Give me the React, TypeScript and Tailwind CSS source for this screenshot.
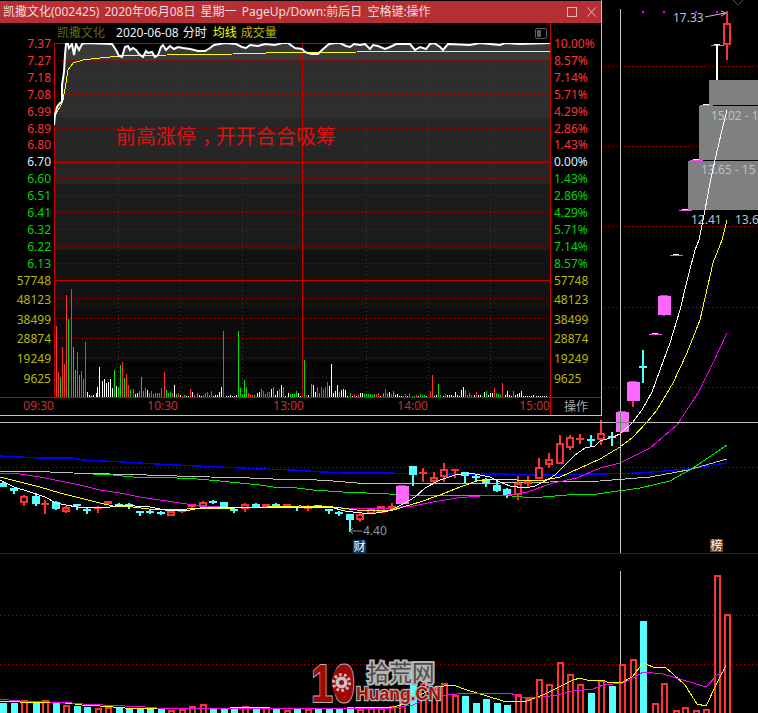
import React from "react";

const R = "#ff3232";
const G = "#00e000";
const W = "#ffffff";
const CY = "#55ffff";
const MG = "#ff66ff";
const GRID = "#c00000";

const toPts = (a: number[][]) => a.map((p) => p.join(",")).join(" ");

const price = [[54,125],[55,115],[57,107],[60,103],[62,102],[62,85],[64,72],[65,55],[66,44],[68,44],[69,48],[72,44],[74,55],[76,44],[79,50],[82,44],[85,43],[112,44],[116,50],[119,56],[122,57],[125,47],[128,46],[130,50],[133,48],[136,50],[139,54],[143,57],[146,51],[148,53],[152,52],[155,57],[158,55],[161,47],[163,45],[166,50],[170,46],[174,49],[178,47],[183,48],[190,49],[198,51],[205,51],[210,48],[214,45],[225,43],[236,44],[242,47],[246,48],[250,45],[258,46],[265,44],[275,45],[282,43],[288,43],[295,48],[302,49],[305,52],[308,53],[312,54],[318,54],[322,50],[329,44],[335,43],[340,43],[346,46],[350,47],[354,44],[360,45],[365,44],[370,49],[373,45],[378,46],[385,49],[390,47],[396,44],[410,44],[415,50],[420,47],[426,49],[430,44],[434,43],[440,47],[443,50],[448,44],[470,45],[480,43],[490,44],[500,45],[505,43],[520,44],[550,43]];
const avg = [[55,115],[60,107],[63,100],[66,83],[68,70],[73,63],[83,60],[100,58],[120,56],[167,55],[233,54],[283,52.5],[310,53],[357,52],[360,51.5],[550,51]];

const volA: [number, number, string][] = [[168,168,R],[174,306,R],[180,320,G],[187,232,R],[193,282,R],[199,75,R],[205,148,G],[213,57,R],[220,232,G],[226,300,G],[232,246,R],[238,315,G],[244,304,R],[250,327,G],[256,216,R],[262,366,W],[268,375,W],[274,378,W],[280,375,W],[287,369,W],[292,350,W],[298,291,W],[306,333,W],[312,327,W],[319,338,W],[325,336,W],[331,327,W],[337,354,W],[343,300,G],[349,348,W],[355,351,G],[361,285,G],[367,276,R],[373,323,G],[379,312,R],[385,345,R],[391,360,G],[400,357,R],[406,372,W],[412,369,W],[418,363,G],[424,321,G],[430,363,G],[436,354,R],[442,360,W],[448,369,G],[454,363,R],[460,372,R],[466,369,G],[472,369,G],[478,369,R],[484,354,R],[493,306,R],[499,360,G],[505,369,G],[511,366,G],[517,369,R],[523,345,W],[529,372,G],[535,369,R],[541,375,W],[547,378,R],[553,375,G],[559,378,W],[565,378,W],[571,357,R],[577,366,W],[583,375,R],[592,369,G],[598,375,W],[604,378,W],[610,375,R],[616,369,R],[622,366,R],[628,375,G],[634,363,R],[640,378,W],[646,375,W],[652,375,W],[658,366,W],[664,351,W],[670,183,R],[678,378,W],[684,378,W],[690,375,W],[696,378,W],[702,378,W],[708,375,W],[715,183,G],[721,354,G],[727,372,G],[733,330,G],[739,351,G],[745,369,R],[751,372,R],[757,375,R],[763,375,G],[771,369,W],[777,366,W],[784,357,G],[790,363,R],[796,372,G],[802,366,R],[808,366,R],[814,357,W],[820,351,G],[826,375,W],[832,363,W],[838,357,R],[844,345,W],[850,351,R],[856,378,W],[864,369,W],[871,372,G],[877,372,G],[883,372,G],[889,363,G],[895,369,W],[901,378,W],[913,270,G],[919,375,R],[925,375,W]];
const volB: [number, number, string][] = [[32,342,G],[38,345,W],[44,366,W],[50,351,R],[58,369,G],[64,351,R],[70,357,R],[76,351,R],[82,336,R],[88,348,W],[94,282,W],[100,369,W],[106,363,W],[112,345,W],[118,366,G],[124,360,W],[130,357,W],[136,360,W],[142,378,W],[150,369,G],[156,378,W],[163,372,R],[169,378,W],[175,375,R],[181,369,W],[187,369,W],[193,372,G],[199,372,G],[205,372,G],[211,372,G],[217,375,G],[223,372,G],[229,372,R],[235,369,R],[241,378,W],[249,369,G],[255,357,R],[261,369,G],[267,366,W],[273,372,R],[279,363,G],[285,375,W],[291,372,W],[297,378,W],[303,378,W],[309,378,R],[316,372,R],[322,378,W],[328,369,R],[336,378,G],[342,378,G],[348,375,R],[354,378,W],[360,372,G],[366,375,G],[372,375,G],[378,378,W],[391,363,R],[397,315,R],[403,378,W],[409,375,W],[415,342,G],[421,375,G],[429,378,W],[435,372,R],[441,375,W],[447,375,W],[453,375,W],[459,378,W],[466,366,W],[472,375,W],[478,378,W],[484,360,W],[490,351,W],[496,360,G],[502,375,R],[508,369,G],[514,375,R],[522,375,W],[529,366,R],[535,375,W],[541,375,W],[547,378,G],[553,366,W],[559,363,G],[565,375,W],[571,369,W],[577,369,W],[583,354,R],[589,369,G],[595,372,G],[601,375,G],[607,339,R],[616,375,W],[622,363,W],[628,375,W],[634,378,W],[640,363,G],[646,375,W],[652,372,W],[658,369,W],[664,363,W],[670,378,W],[676,378,W],[682,378,W],[688,378,W],[694,378,W],[700,375,W],[708,378,W],[714,378,W],[720,378,W],[726,378,W],[732,378,W],[738,378,W]];
const vols = [
  ...volA.map(([z, t, c]) => ({ x: Math.round(z / 3), y: Math.round(270 + t / 3), c })),
  ...volB.map(([z, t, c]) => ({ x: Math.round(300 + z / 3), y: Math.round(270 + t / 3), c })),
];

type C = [number, number, number, number, number, string];
const candles: C[] = [
  [3,481,487,483,487,"c"],[14,488,494,488,491,"c"],[24,495,506,496,503,"r"],[36,493,506,496,504,"c"],[45,500,514,503,505,"f"],[56,501,510,502,509,"c"],[66,506,513,507,512,"r"],[77,504,510,504,505,"c"],[87,507,514,509,510,"c"],[98,506,513,507,509,"f"],[108,501,504,501,504,"f"],[119,503,507,504,506,"c"],[129,503,509,504,507,"c"],[140,511,516,511,512,"c"],[150,509,514,511,512,"c"],[161,511,515,512,513,"c"],[171,511,516,511,516,"r"],[182,509,513,509,512,"f"],[192,504,509,504,507,"f"],[203,501,509,502,507,"r"],[213,500,504,501,503,"c"],[224,502,509,502,507,"c"],[234,508,513,509,511,"c"],[245,503,512,504,509,"r"],[256,503,507,504,507,"c"],[266,504,507,504,507,"f"],[276,503,506,504,505,"c"],[287,504,507,504,507,"f"],[297,506,511,506,507,"c"],
  [308,505,511,506,509,"f"],[318,505,507,505,507,"c"],[329,509,514,509,511,"c"],[339,511,516,512,513,"c"],[350,514,532,514,520,"c"],[360,513,522,514,520,"r"],[371,509,514,509,514,"r"],[381,506,513,506,513,"r"],[392,503,509,506,509,"f"],[413,466,486,466,475,"c"],[423,468,482,472,474,"f"],[434,472,483,477,482,"r"],[444,463,482,469,477,"r"],[455,469,478,469,471,"f"],[465,472,483,472,476,"c"],[476,475,482,476,477,"c"],[486,478,487,479,484,"c"],[497,481,492,485,491,"c"],[507,488,498,489,495,"c"],[518,476,500,483,495,"r"],[528,476,487,481,484,"r"],[539,458,479,467,479,"r"],[549,453,468,459,465,"r"],[560,435,464,443,464,"r"],[570,435,450,437,448,"r"],[580,434,444,438,440,"f"],[591,435,446,439,441,"c"],[601,420,445,433,440,"r"],[612,432,446,436,438,"c"],[643,350,383,366,368,"c"],[727,12,60,23,45,"r"],
];
const mags: [number, number, number, number][] = [[402,486,504,504],[622,412,432,433],[633,382,401,407],[664,296,315,316]];
const dojis: [number, number][] = [[655,334],[676,255],[685,210],[696,160],[706,105],[717,45]];

const MA5 = [[0,480],[14,487],[30,492],[45,497],[56,503],[66,505],[77,507],[90,507.5],[105,508],[115,506],[125,505.5],[135,506],[150,507],[165,510],[180,511],[190,510],[200,508],[210,507],[240,507],[300,507],[330,507],[345,511],[370,514],[388,511],[395,508],[405,503],[415,497],[425,488],[440,480],[455,475],[470,473],[480,475],[490,477],[500,482],[510,486],[525,488],[535,486],[545,481],[555,475],[565,465],[575,455],[585,448],[595,446],[600,441],[610,438],[620,434],[632,423],[642,410],[652,392],[660,370],[670,343],[680,310],[688,277],[695,250],[699,240],[705,210],[710,183],[715,160],[722,130],[727,110]];
const MA10 = [[0,477],[20,482],[40,487],[60,493],[80,498],[100,503],[113,506],[133,507],[157,510],[187,509],[207,508],[233,508],[267,507],[300,506],[333,507],[357,510],[390,511],[403,507],[420,502],[440,495],[460,487],[477,481],[497,479],[517,480],[540,481],[560,477],[580,468],[600,459],[620,447],[633,437],[647,422],[657,410],[673,383],[687,353],[700,320],[713,263],[722,240],[727,220]];
const MA20 = [[0,473],[20,474],[40,477],[60,481],[80,485],[100,490],[120,493],[140,497],[160,500],[180,503],[200,506],[220,507],[260,508],[300,507],[343,508],[390,508],[413,506],[433,502],[457,498],[480,496],[507,495],[527,492],[553,483],[577,478],[600,468],[620,463],[650,448],[677,425],[698,393],[713,363],[727,333]];
const GREEN = [[93,474],[113,475],[133,477],[157,477],[177,478],[197,479],[220,481],[240,483],[260,485],[273,487],[297,488],[313,490],[343,492],[367,493],[410,495],[457,495],[500,495],[523,497],[543,497],[567,495],[597,494],[640,488],[670,481],[693,468],[727,445]];
const GREY = [[0,471],[20,471],[50,472],[73,473],[110,474],[147,475],[177,476],[210,477],[250,478],[273,479],[300,479],[333,481],[357,483],[400,483],[500,483],[600,481],[650,477],[688,470],[727,459]];
const BLUE = [[0,456],[20,457],[40,458],[72,458],[83,460],[103,461],[123,462],[157,464],[177,465],[197,466],[220,467],[240,468],[260,469],[293,470],[323,472],[347,473],[377,473],[460,474],[500,474],[540,475],[600,474],[640,473],[688,469],[727,463]];

const vBars: [number, number, string][] = [[3,703,"c"],[14,703,"c"],[24,700,"r"],[36,703,"c"],[45,700,"r"],[56,703,"c"],[66,705,"r"],[77,706,"c"],[87,707,"c"],[98,708,"r"],[108,707,"r"],[119,707,"c"],[129,709,"c"],[140,708,"c"],[150,708,"c"],[161,709,"c"],[171,710,"r"],[182,709,"r"],[192,706,"r"],[203,704,"r"],[213,709,"c"],[224,709,"c"],[234,709,"c"],[245,706,"r"],[256,709,"c"],[266,707,"r"],[276,709,"c"],[287,710,"r"],[297,709,"c"],[308,709,"r"],[318,709,"c"],[329,709,"c"],[339,709,"c"],[350,707,"c"],[360,709,"r"],[371,708,"r"],[381,708,"r"],[392,706,"r"],[402,695,"r"],[413,668,"c"],[423,683,"r"],[434,687,"r"],[444,683,"r"],[455,695,"r"],[465,696,"c"],[476,703,"c"],[486,699,"c"],[497,703,"c"],[507,705,"c"],[518,694,"r"],[528,698,"r"],[539,679,"r"],[549,684,"r"],[560,662,"r"],[570,674,"r"],[580,684,"r"],[591,693,"c"],[601,680,"r"],[612,686,"c"],[622,664,"r"],[633,659,"r"],[643,621,"c"],[655,703,"r"],[664,683,"r"],[676,710,"r"],[685,707,"r"],[696,710,"r"],[706,709,"r"],[717,575,"r"],[727,614,"r"]];
const subY = [[0,701],[10,701],[20,702],[50,702],[65,703],[75,704],[85,705.5],[100,706],[125,708],[155,708],[210,709],[250,707],[290,709],[355,708],[393,707],[408,703],[420,695],[435,687],[453,685],[467,690],[487,696],[503,701],[527,701],[543,695],[557,688],[573,680],[580,678],[590,681],[602,680],[610,683],[623,682],[632,677],[643,663],[653,667],[665,667],[673,674],[685,685],[697,704],[706,706],[717,683],[726,665]];
const subM = [[0,699],[9,700],[20,701],[50,702],[72,703],[83,704],[103,705],[125,706],[145,707],[157,708],[393,708],[413,705],[427,698],[447,695],[467,693],[510,693],[520,697],[543,697],[557,695],[573,691],[593,689],[603,685],[623,683],[635,677],[643,672],[663,674],[683,680],[706,687],[717,675],[726,670]];

const priceLabels: [string, string][] = [["7.37","#ff3232"],["7.27","#ff3232"],["7.18","#ff3232"],["7.08","#ff3232"],["6.99","#ff3232"],["6.89","#ff3232"],["6.80","#ff3232"],["6.70","#dfeeff"],["6.60","#00d800"],["6.51","#00d800"],["6.41","#00d800"],["6.32","#00d800"],["6.22","#00d800"],["6.13","#00d800"]];
const pctLabels: [string, string][] = [["10.00%","#ff3232"],["8.57%","#ff3232"],["7.14%","#ff3232"],["5.71%","#ff3232"],["4.29%","#ff3232"],["2.86%","#ff3232"],["1.43%","#ff3232"],["0.00%","#dfeeff"],["1.43%","#00d800"],["2.86%","#00d800"],["4.29%","#00d800"],["5.71%","#00d800"],["7.14%","#00d800"],["8.57%","#00d800"]];
const volLabels = ["57748", "48123", "38499", "28874", "19249", "9625"];
const FONT = "font-['Noto_Sans','Noto_Sans_CJK_SC',sans-serif]";

function Line({ p, c, w = 1 }: { p: number[][]; c: string; w?: number }) {
  return <polyline points={toPts(p)} fill="none" stroke={c} strokeWidth={w} shapeRendering="crispEdges" />;
}

function DotLine({ x1, x2, y1, y2 }: { x1: number; x2: number; y1: number; y2: number }) {
  return <line x1={x1} x2={x2} y1={y1} y2={y2} stroke={GRID} strokeDasharray="1 3" shapeRendering="crispEdges" />;
}

function KLinePane() {
  return (
    <svg width="758" height="553" viewBox="0 0 758 553" className={`block ${FONT}`}>
      {[66, 146, 226, 307, 387, 467].map((y) => (
        <DotLine key={y} x1={0} x2={758} y1={y + 0.5} y2={y + 0.5} />
      ))}
      <rect x="709" y="80" width="49" height="25" fill="#808080" />
      <rect x="699" y="106" width="59" height="54" fill="#808080" />
      <rect x="688" y="161" width="70" height="49" fill="#808080" />
      <text x="711" y="120" fontSize="12" fill="#b4c4c8">15.02 - 1</text>
      <text x="701" y="174" fontSize="12" fill="#b4c4c8">13.65 - 15</text>
      <text x="691" y="224" fontSize="12" fill="#b4c4c8">12.41</text>
      <text x="735" y="224" fontSize="12" fill="#b4c4c8">13.6</text>

      <Line p={BLUE} c="#0000ff" w={1.4} />
      <Line p={GREY} c="#c0c0c0" />
      <Line p={GREEN} c="#00f000" />

      {candles.map(([x, hi, lo, t, b, k], i) => {
        const col = k === "c" ? CY : R;
        return (
          <g key={i} shapeRendering="crispEdges">
            <rect x={x - 1} y={hi} width="2" height={lo - hi} fill={col} />
            {k === "r" ? (
              <rect x={x - 3} y={t + 1} width="6" height={Math.max(b - t - 2, 1)} fill="#000" stroke={R} strokeWidth="2" />
            ) : (
              <rect x={x - 4} y={t} width="8" height={Math.max(b - t, 2)} fill={col} />
            )}
          </g>
        );
      })}
      {mags.map(([x, t, b, lo]) => (
        <g key={x} shapeRendering="crispEdges">
          <rect x={x - 1} y={t} width="2" height={lo - t} fill={R} />
          <rect x={x - 4} y={t - 1} width="8" height="1" fill={R} />
          <rect x={x - 6.5} y={t} width="13" height={b - t} fill={MG} />
        </g>
      ))}
      {dojis.map(([x, y]) => (
        <g key={x} shapeRendering="crispEdges">
          <rect x={x - 6.5} y={y} width="13" height="1" fill="#ff44ff" />
          <rect x={x - 3} y={y - 1} width="6" height="1" fill="#fff" />
        </g>
      ))}
      <rect x="716" y="45" width="2" height="35" fill="#fff" shapeRendering="crispEdges" />

      <Line p={MA20} c="#ff00ff" />
      <Line p={MA10} c="#ffff00" />
      <Line p={MA5} c="#ffffff" />

      {[643, 664, 696, 717, 727].map((x) => (
        <rect key={x} x={x - 1} y="11" width="2" height="2" fill="#ff00ff" />
      ))}
      <text x="673" y="22" fontSize="12" fill="#a8c4dc">17.33</text>
      <polyline points="705,17 725,13" fill="none" stroke="#c0c0c0" />
      <polyline points="721,11 726,13 721,16" fill="none" stroke="#c0c0c0" />
      <polyline points="733,0 738,5 743,0" fill="none" stroke="#555555" />

      <text x="363" y="535" fontSize="12" fill="#8a9aa8">4.40</text>
      <polyline points="350,531 362,531" fill="none" stroke="#909090" />
      <polyline points="353,528 350,531 353,534" fill="none" stroke="#909090" />

      <rect x="0" y="422" width="758" height="1" fill="#c0c0c0" />
      <rect x="620" y="9" width="1" height="544" fill="#c0c0c0" />
      <rect x="620" y="412" width="1" height="20" fill="#5a9a5a" />
      <rect x="616" y="422" width="13" height="1" fill="#5a9a5a" />
    </svg>
  );
}

function VolumePane() {
  return (
    <svg width="758" height="160" viewBox="0 553 758 160" className={`block ${FONT}`}>
      <rect x="0" y="553" width="758" height="1" fill="#8a0000" />
      {[615, 664].map((y) => (
        <DotLine key={y} x1={0} x2={758} y1={y + 0.5} y2={y + 0.5} />
      ))}
      <rect x="620" y="571" width="1" height="142" fill="#c0c0c0" />
      {vBars.map(([x, t, k]) =>
        k === "c" ? (
          <rect key={x} x={x - 3.5} y={t} width="7" height={713 - t} fill={CY} shapeRendering="crispEdges" />
        ) : (
          <rect key={x} x={x - 2.5} y={t + 1} width="5" height={715 - t} fill="#000" stroke={R} strokeWidth="2" shapeRendering="crispEdges" />
        )
      )}
      <Line p={subY} c="#ffff00" />
      <Line p={subM} c="#ff00ff" />

      <g>
        <text x="367" y="681" fontSize="22.5" fill="#4a4a4a" stroke="#b4b4b4" strokeWidth="4" paintOrder="stroke">拾荒网</text>
        <text x="311" y="702" fontSize="54" fontWeight="700" fill="#a00808" stroke="#b4b4b4" strokeWidth="2" paintOrder="stroke" textLength="44" lengthAdjust="spacingAndGlyphs" className="font-['Liberation_Sans',sans-serif]">10</text>
        <ellipse cx="341.5" cy="682.5" rx="10" ry="15" fill="#a00808" />
        <circle cx="341.5" cy="682.5" r="8" fill="none" stroke="#c4c4c4" strokeWidth="3" strokeDasharray="2.6 2.4" />
        <circle cx="341.5" cy="682.5" r="6" fill="#c4c4c4" />
        <circle cx="341.5" cy="682.5" r="2.5" fill="#a00808" />
        <text x="356" y="700" fontSize="19" fontWeight="700" fill="#a81010" stroke="#b4b4b4" strokeWidth="2.5" paintOrder="stroke" textLength="85" lengthAdjust="spacingAndGlyphs" className="font-['Liberation_Sans',sans-serif]">Huang.CN</text>
      </g>
    </svg>
  );
}

function Plot() {
  const hLines = Array.from({ length: 14 }, (_, i) => Math.round(43 + i * 16.92) + 0.5);
  const vDots = [118, 180, 242, 366, 428, 490];
  const volLines = [298.5, 318.5, 338.5, 357.5, 377.5];
  return (
    <div className="relative w-[496px] h-[354px]">
      <svg width="496" height="354" viewBox="54 43 496 354" className="block">
        <rect x="54" y="43" width="496" height="17" fill="#3a3a3a" />
        <rect x="54" y="60" width="496" height="58" fill="#2e2e2e" />
        <rect x="54" y="118" width="496" height="66" fill="#262626" />
        <rect x="54" y="184" width="496" height="66" fill="#1c1c1c" />
        <rect x="54" y="250" width="496" height="59" fill="#121212" />
        <rect x="54" y="309" width="496" height="52" fill="#0c0c0c" />
        <rect x="54" y="361" width="496" height="36" fill="#050505" />
        <polygon points={`54,43 ${toPts(price)} 550,43`} fill="#000" />
        {hLines.map((y) => (
          <DotLine key={y} x1={54} x2={550} y1={y} y2={y} />
        ))}
        {volLines.map((y) => (
          <DotLine key={y} x1={54} x2={550} y1={y} y2={y} />
        ))}
        {vDots.map((x) => (
          <DotLine key={x} x1={x + 0.5} x2={x + 0.5} y1={43} y2={397} />
        ))}
        <g stroke="#c80000" shapeRendering="crispEdges">
          <line x1="54" x2="550" y1="43.5" y2="43.5" />
          <line x1="54" x2="550" y1="162.5" y2="162.5" />
          <line x1="54" x2="550" y1="280.5" y2="280.5" />
          <line x1="54.5" x2="54.5" y1="43" y2="397" />
          <line x1="302.5" x2="302.5" y1="43" y2="397" />
        </g>
        {vols.map((v, i) => (
          <rect key={i} x={v.x} y={v.y} width="1" height={397 - v.y} fill={v.c} shapeRendering="crispEdges" />
        ))}
        <Line p={avg} c="#ffff00" />
        <polyline points={toPts(price)} fill="none" stroke="#ffffff" strokeWidth="2" />
      </svg>
      <div className={`absolute left-[62px] top-[81px] text-[20px] leading-[26px] text-[#e01010] whitespace-nowrap ${FONT}`}>
        前高涨停<span className="pl-[6px] tracking-[-6px]">，</span>开开合合吸筹
      </div>
    </div>
  );
}

function QuoteWindow() {
  return (
    <div className={`absolute left-0 top-0 w-[602px] h-[416px] bg-black border-r border-b border-[#c4c4c4] pt-px text-[12px] ${FONT}`}>
      <div className="h-[22px] bg-[#b52f35] flex items-center justify-between pl-[3px] pr-[5px] text-[#f4dcdc] whitespace-nowrap [word-spacing:2px]">
        <span>凯撒文化(002425) 2020年06月08日 星期一 PageUp/Down:前后日 空格键:操作</span>
        <span className="flex items-center gap-[10px] text-[#e6b8b8]">
          <span className="block w-[10px] h-[10px] border border-[#e6b8b8]" />
          <svg width="9" height="10" viewBox="0 0 9 10" stroke="currentColor" className="block">
            <path d="M0.5 0.5 L8.5 9.5 M8.5 0.5 L0.5 9.5" />
          </svg>
        </span>
      </div>
      <div className="flex h-[392px]">
        <div className="w-[550px] flex flex-col">
          <div className="h-[20px] pl-[57px] pr-[3px] flex items-center justify-between">
            <div className="flex items-center whitespace-nowrap">
              <span className="text-[#606c10]">凯撒文化</span>
              <span className="ml-[11px] text-[#e8f0ff]">2020-06-08</span>
              <span className="ml-[4px] text-[#f0f0f0]">分时</span>
              <span className="ml-[6px] text-[#ffff00]">均线</span>
              <span className="ml-[4px] text-[#b8b800]">成交量</span>
            </div>
            <span className="w-[12px] h-[11px] border border-[#5c5c5c] rounded-[2px] p-px">
              <span className="block w-[4px] h-full bg-[#5c5c5c]" />
            </span>
          </div>
          <div className="flex h-[354px]">
            <div className="w-[54px] -mt-[7px] pr-[3px] text-right">
              {priceLabels.map(([t, c]) => (
                <div key={t} className="h-[16.92px] leading-[16.92px]" style={{ color: c }}>{t}</div>
              ))}
              <div className="-mt-[2px]">
                {volLabels.map((t) => (
                  <div key={t} className="h-[19.6px] leading-[19.6px] text-[#b8b800]">{t}</div>
                ))}
              </div>
            </div>
            <Plot />
          </div>
          <div className="h-[18px] border-t border-[#c80000] flex text-[#cc3030] text-right leading-[16px]">
            <div className="w-[54px]">09:30</div>
            <div className="w-[124px]">10:30</div>
            <div className="w-[126px]">13:00</div>
            <div className="w-[124px]">14:00</div>
            <div className="w-[122px]">15:00</div>
          </div>
        </div>
        <div className="flex-1 border-l border-[#c80000] flex flex-col">
          <div className="h-[374px] pt-[13px] pl-[3px]">
            {pctLabels.map(([t, c], i) => (
              <div key={i} className="h-[16.92px] leading-[16.92px]" style={{ color: c }}>{t}</div>
            ))}
            <div className="-mt-[2px]">
              {volLabels.map((t) => (
                <div key={t} className="h-[19.6px] leading-[19.6px] text-[#b8b800]">{t}</div>
              ))}
            </div>
          </div>
          <div className="h-[18px] border-t border-[#c80000] flex items-center justify-center leading-[16px] text-[#a8a8b0]">操作</div>
        </div>
      </div>
    </div>
  );
}

export default function App() {
  return (
    <div className={`relative w-[758px] h-[713px] bg-black overflow-hidden ${FONT}`}>
      <KLinePane />
      <VolumePane />
      <div className="absolute left-[353px] top-[540px] w-[13px] h-[13px] bg-[#0a3a70] text-white text-[12px] leading-[13px] text-center">财</div>
      <div className="absolute left-[710px] top-[539px] w-[13px] h-[13px] bg-[#7a4010] text-white text-[12px] leading-[13px] text-center">榜</div>
      <QuoteWindow />
    </div>
  );
}
